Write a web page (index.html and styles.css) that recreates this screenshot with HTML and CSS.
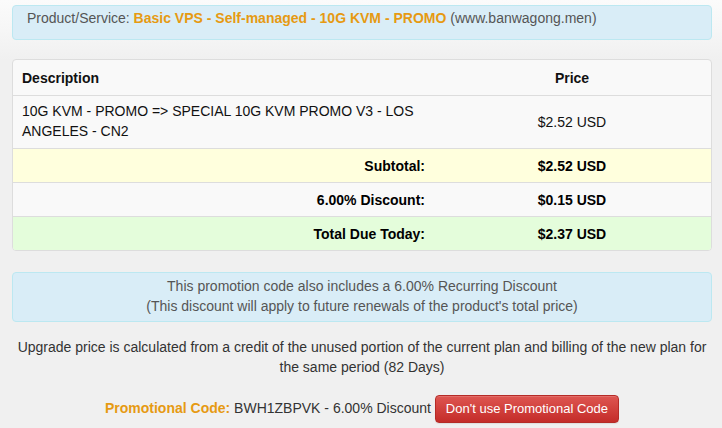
FILE: index.html
```html
<!DOCTYPE html>
<html lang="en">
<head>
  <meta charset="UTF-8">
  <title>Upgrade Order Summary</title>
  <link rel="stylesheet" href="styles.css">
</head>
<body>
  <div class="page">
    <div class="alert product-alert">
      Product/Service: <strong class="orange">Basic VPS - Self-managed - 10G KVM - PROMO</strong> (www.banwagong.men)
    </div>

    <div class="summary">
      <div class="row head">
        <div class="desc">Description</div>
        <div class="price">Price</div>
      </div>
      <div class="row item">
        <div class="desc">10G KVM - PROMO =&gt; SPECIAL 10G KVM PROMO V3 - LOS ANGELES - CN2</div>
        <div class="price">$2.52 USD</div>
      </div>
      <div class="row total subtotal">
        <div class="desc">Subtotal:</div>
        <div class="price">$2.52 USD</div>
      </div>
      <div class="row total">
        <div class="desc">6.00% Discount:</div>
        <div class="price">$0.15 USD</div>
      </div>
      <div class="row total due">
        <div class="desc">Total Due Today:</div>
        <div class="price">$2.37 USD</div>
      </div>
    </div>

    <div class="alert recurring-alert">
      This promotion code also includes a 6.00% Recurring Discount<br>
      (This discount will apply to future renewals of the product's total price)
    </div>

    <p class="note">Upgrade price is calculated from a credit of the unused portion of the current plan and billing of the new plan for the same period (82 Days)</p>

    <div class="promo">
      <strong class="orange">Promotional Code:</strong> BWH1ZBPVK - 6.00% Discount <button class="btn-danger">Don't use Promotional Code</button>
    </div>
  </div>
</body>
</html>
```

FILE: styles.css
```css
/* Reset */
* { box-sizing: border-box; margin: 0; padding: 0; }
html, body {
  width: 100%; height: 100%;
}
body {
  background: #f0f0f0 linear-gradient(to bottom, #fbfbfb 0, #f6f6f6 30px, #f0f0f0 60px) no-repeat;
  font-family: "Liberation Sans", Arial, sans-serif;
  font-size: 14px;
  line-height: 20px;
  color: #333;
}

.page {
  padding: 5px 10px 0 12px;
}

.orange { color: #e69a12; }

/* Blue info boxes */
.alert {
  background: #d9edf7;
  border: 1px solid #bce8f1;
  border-radius: 4px;
  color: #555;
}
.product-alert {
  height: 35px;
  padding: 2px 14px;
}
.recurring-alert {
  margin-top: 21px;
  padding: 3px 14px 5px;
  text-align: center;
}

/* Order summary table */
.summary {
  margin-top: 19px;
  border: 1px solid #ddd;
  border-radius: 4px;
  background: #f9f9f9;
  overflow: hidden;
}
.row {
  display: flex;
  align-items: center;
  border-top: 1px solid #ddd;
}
.row:first-child { border-top: 0; }
.row .desc {
  width: 420px;
  padding: 8px 9px;
}
.row .price {
  flex: 1;
  text-align: center;
}
.head {
  height: 35px;
  font-weight: bold;
  color: #111;
}
.item { height: 53px; color: #111; }
.item .desc { padding: 5px 9px 7px; }
.total {
  height: 34px;
  font-weight: bold;
  color: #000;
}
.total .desc { text-align: right; padding-right: 8px; }
.subtotal { background: #ffffdd; }
.due { background: #e4fddb; }

/* Upgrade note */
.note {
  margin: 15px -6px 0;
  text-align: center;
  color: #333;
}

/* Promo code line */
.promo {
  margin-top: 18px;
  text-align: center;
  color: #333;
}
.btn-danger {
  padding: 4px 10px;
  font-family: inherit;
  font-size: 13px;
  line-height: 18px;
  color: #fff;
  background: linear-gradient(to bottom, #de5651 0, #c42c29 100%);
  border: 1px solid #b52b27;
  border-radius: 4px;
  box-shadow: inset 0 1px 0 rgba(255,255,255,.15), 0 1px 1px rgba(0,0,0,.08);
  cursor: pointer;
}
```
